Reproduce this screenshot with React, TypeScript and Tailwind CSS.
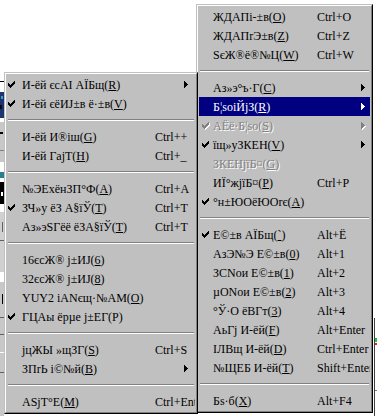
import React from "react";

type Entry =
  | { sep: true }
  | {
      sep?: false;
      t: string;
      m: string;
      sc?: string;
      check?: boolean;
      sub?: boolean;
      disabled?: boolean;
      active?: boolean;
      noUl?: boolean;
    };

const SEP: Entry = { sep: true };

const leftItems: Entry[] = [
  { t: "И-ёй єсАІ АЇБщ", m: "R", check: true, sub: true },
  { t: "И-ёй єёИЈ±в ё·±в", m: "V", check: true },
  SEP,
  { t: "И-ёй И®іш", m: "G", sc: "Ctrl++" },
  { t: "И-ёй ГajТ", m: "H", sc: "Ctrl+_" },
  SEP,
  { t: "№ЭЕхёнЗП°Ф", m: "A", sc: "Ctrl+A" },
  { t: "ЗЧ»у ёЗ А§їЎ", m: "T", sc: "Ctrl+T", check: true },
  { t: "Аз»эЅГёё ёЗА§їЎ", m: "T", sc: "Ctrl+T" },
  SEP,
  { t: "16єсЖ® j±ИЈ", m: "6" },
  { t: "32єсЖ® j±ИЈ", m: "8" },
  { t: "YUY2 іАNєщ·№АМ", m: "O" },
  { t: "ГЦАы ёрµе j±ЕГ", m: "P", check: true, noUl: true },
  SEP,
  { t: "jцЖЫ »щЗГ", m: "S", sc: "Ctrl+S" },
  { t: "ЗПrЬ і©№й", m: "B", sub: true },
  SEP,
  { t: "АЅjТ°Е", m: "M", sc: "Ctrl+Enter" },
];

const rightItems: Entry[] = [
  { t: "ЖДАПі-±в", m: "O", sc: "Ctrl+O" },
  { t: "ЖДАПrЭ±в", m: "Z", sc: "Ctrl+Z" },
  { t: "ЅєЖ®ё®№Ц", m: "W", sc: "Ctrl+W" },
  SEP,
  { t: "Аз»э°ъ·Г", m: "C", sub: true },
  { t: "Б¦soіЙjЗ", m: "R", sub: true, active: true },
  { t: "АЁё·Б¦so", m: "S", sub: true, check: true, disabled: true },
  { t: "їщ»уЗКЕН", m: "V", sub: true, check: true },
  { t: "ЗКЕНjїБ¤", m: "G", disabled: true },
  { t: "ИЇ°жjїБ¤", m: "P", sc: "Ctrl+P" },
  { t: "°н±ЮОёЮОrє", m: "A", check: true },
  SEP,
  { t: "Е©±в АЇБщ", m: "`", sc: "Alt+Ё", check: true },
  { t: "АзЭ№Э Е©±в", m: "0", sc: "Alt+1" },
  { t: "ЗСNои Е©±в", m: "1", sc: "Alt+2" },
  { t: "µОNои Е©±в", m: "2", sc: "Alt+3" },
  { t: "°Ў·О ёВГт", m: "3", sc: "Alt+4" },
  { t: "АьГj И-ёй", m: "F", sc: "Alt+Enter" },
  { t: "ІЛВщ И-ёй", m: "D", sc: "Ctrl+Enter" },
  { t: "№ЩЕБ И-ёй", m: "T", sc: "Shift+Enter" },
  SEP,
  { t: "Бs·б", m: "X", sc: "Alt+F4" },
];

const CHECK =
  "M6 0h1v1h-1z M5 1h2v1h-2z M0 2h1v1h-1z M4 2h3v1h-3z M0 3h2v1h-2z M3 3h3v1h-3z M0 4h5v1h-5z M1 5h3v1h-3z M2 6h1v1h-1z";
const ARROW = "M0 0h1v7h-1z M1 1h1v5h-1z M2 2h1v3h-1z M3 3h1v1h-1z";

function CheckMark({ color, shadow }: { color: string; shadow?: boolean }) {
  return (
    <svg width="8" height="8" viewBox="0 0 8 8" shapeRendering="crispEdges" className="block">
      {shadow && <path d={CHECK} fill="#ffffff" transform="translate(1 1)" />}
      <path d={CHECK} fill={color} />
    </svg>
  );
}

function SubArrow({ color, shadow }: { color: string; shadow?: boolean }) {
  return (
    <svg width="5" height="8" viewBox="0 0 5 8" shapeRendering="crispEdges" className="block">
      {shadow && <path d={ARROW} fill="#ffffff" transform="translate(1 1)" />}
      <path d={ARROW} fill={color} />
    </svg>
  );
}

type MenuProps = {
  items: Entry[];
  frame: string;
  checkCol: string;
  labelCol: string;
  arrowGap: string;
};

function Menu({ items, frame, checkCol, labelCol, arrowGap }: MenuProps) {
  return (
    <div
      className={`absolute border border-t-[#c0c0c0] border-l-[#c0c0c0] border-r-black border-b-black bg-[#c0c0c0] ${frame}`}
    >
      <div className="border border-t-white border-l-white border-r-[#808080] border-b-[#808080] p-px">
        {items.map((it, i) => {
          if (it.sep) {
            return (
              <div key={i} className="flex h-[14px] items-center px-px">
                <div className="h-[2px] w-full border-t border-b border-t-[#808080] border-b-white" />
              </div>
            );
          }
          const ink = it.active ? "#ffffff" : it.disabled ? "#808080" : "#000000";
          return (
            <div
              key={i}
              className={`flex h-[19px] items-center overflow-hidden whitespace-nowrap ${
                it.active
                  ? "bg-[#000080] text-white"
                  : it.disabled
                    ? "text-[#808080] [text-shadow:1px_1px_0_#ffffff]"
                    : "text-black"
              }`}
            >
              <div className={`flex shrink-0 items-center ${checkCol}`}>
                {it.check && <CheckMark color={ink} shadow={it.disabled} />}
              </div>
              <div className={`shrink-0 ${labelCol}`}>
                {it.t}(
                {it.noUl ? it.m : <span className="underline decoration-1 underline-offset-[1px]">{it.m}</span>})
              </div>
              <div className="flex-1">{it.sc}</div>
              {it.sub && (
                <div className={arrowGap}>
                  <SubArrow color={ink} shadow={it.disabled} />
                </div>
              )}
            </div>
          );
        })}
      </div>
    </div>
  );
}

function LeftStrip() {
  return (
    <svg
      className="absolute left-0 top-[72px]"
      width="4"
      height="344"
      viewBox="0 0 4 344"
      shapeRendering="crispEdges"
    >
      <rect x="0" y="0" width="4" height="344" fill="#ffffff" />
      <rect x="0" y="9" width="4" height="1" fill="#000000" />
      <rect x="0" y="20" width="4" height="26" fill="#1c3570" />
      <rect x="1" y="24" width="2" height="3" fill="#3aa0c0" />
      <rect x="0" y="33" width="2" height="4" fill="#0a0a0a" />
      <rect x="0" y="50" width="4" height="40" fill="#c8c8c8" />
      <rect x="0" y="60" width="3" height="2" fill="#000000" />
      <rect x="0" y="78" width="4" height="1" fill="#808080" />
      <rect x="0" y="100" width="4" height="6" fill="#2a7f8f" />
      <rect x="0" y="110" width="4" height="22" fill="#000000" />
      <rect x="1" y="120" width="2" height="4" fill="#ffffff" />
      <rect x="0" y="140" width="4" height="60" fill="#d0d0d0" />
      <rect x="2" y="150" width="1" height="10" fill="#606060" />
      <rect x="0" y="168" width="4" height="1" fill="#606060" />
      <rect x="0" y="210" width="4" height="134" fill="#c8c8c8" />
      <rect x="2" y="222" width="1" height="10" fill="#000000" />
      <rect x="0" y="245" width="4" height="1" fill="#606060" />
      <rect x="0" y="262" width="4" height="1" fill="#606060" />
      <rect x="0" y="280" width="4" height="1" fill="#ffffff" />
      <rect x="0" y="300" width="4" height="1" fill="#606060" />
    </svg>
  );
}

function RightStrip() {
  return (
    <svg
      className="absolute left-[373px] top-0"
      width="4"
      height="416"
      viewBox="0 0 4 416"
      shapeRendering="crispEdges"
    >
      <rect x="0" y="0" width="4" height="416" fill="#ffffff" />
      <rect x="1" y="318" width="1" height="98" fill="#404040" />
      <rect x="2" y="338" width="2" height="4" fill="#20c040" />
      <rect x="2" y="343" width="2" height="2" fill="#e02020" />
      <rect x="2" y="390" width="2" height="1" fill="#808080" />
    </svg>
  );
}

export default function App() {
  return (
    <div className="relative h-[416px] w-[377px] overflow-hidden bg-white font-['Liberation_Serif',serif] text-[12px] leading-none">
      <LeftStrip />
      <RightStrip />
      <Menu
        items={rightItems}
        frame="left-[196px] top-[4px] w-[177px]"
        checkCol="w-[14px] pl-[3px]"
        labelCol="w-[104px]"
        arrowGap="mr-[4px]"
      />
      <Menu
        items={leftItems}
        frame="left-[4px] top-[72px] w-[194px] z-10"
        checkCol="w-[15px] pl-[1px]"
        labelCol="w-[133px]"
        arrowGap="mr-[6px]"
      />
    </div>
  );
}
